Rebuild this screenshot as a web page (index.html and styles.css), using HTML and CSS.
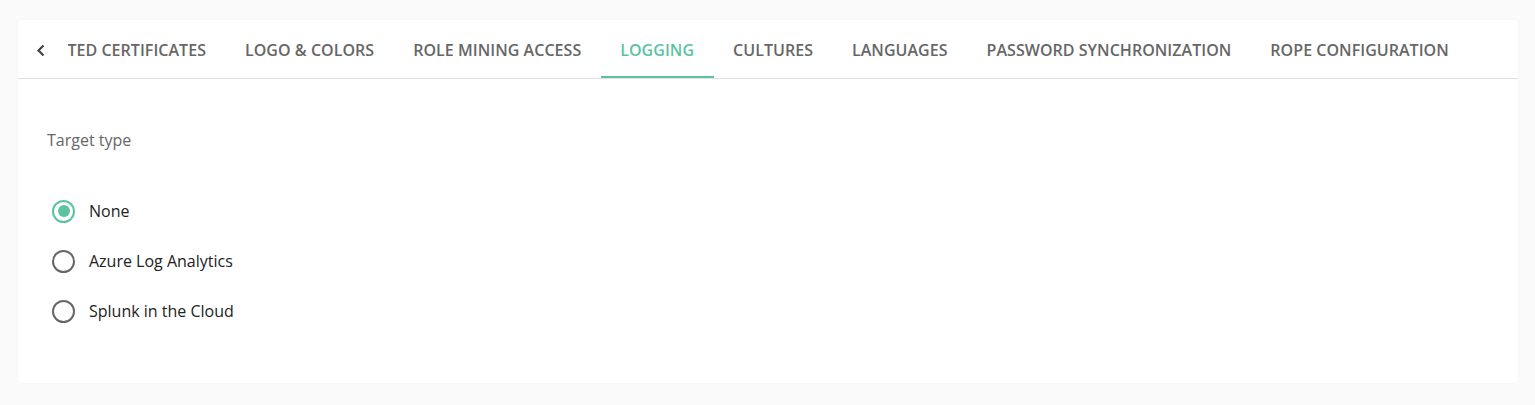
FILE: index.html
```html
<!DOCTYPE html>
<html lang="en">
<head>
<meta charset="utf-8">
<title>Logging</title>
<link rel="stylesheet" href="styles.css">
</head>
<body>
<div class="card">
  <div class="tabbar">
    <button class="scroll-btn" aria-label="Scroll left">
      <svg width="10" height="13" viewBox="0 0 10 13"><path d="M7.5 1.5 L2.5 6.5 L7.5 11.5" fill="none" stroke="#444" stroke-width="2.2"/></svg>
    </button>
    <div class="tabs">
      <div class="tab tab-clipped">TRUSTED CERTIFICATES</div>
      <div class="tab">LOGO &amp; COLORS</div>
      <div class="tab">ROLE MINING ACCESS</div>
      <div class="tab active">LOGGING</div>
      <div class="tab">CULTURES</div>
      <div class="tab">LANGUAGES</div>
      <div class="tab">PASSWORD SYNCHRONIZATION</div>
      <div class="tab">ROPE CONFIGURATION</div>
    </div>
  </div>
  <div class="content">
    <div class="field-label">Target type</div>
    <div class="radios">
      <label class="radio checked"><span class="dot"></span><span class="radio-text">None</span></label>
      <label class="radio"><span class="dot"></span><span class="radio-text">Azure Log Analytics</span></label>
      <label class="radio"><span class="dot"></span><span class="radio-text">Splunk in the Cloud</span></label>
    </div>
  </div>
</div>
</body>
</html>
```

FILE: styles.css
```css
* { box-sizing: border-box; }
html, body { margin: 0; padding: 0; }
body {
  background: #fafafa;
  font-family: "Open Sans", "Noto Sans", sans-serif;
  width: 1535px;
  height: 405px;
  overflow: hidden;
}
.card {
  margin: 20px 0 0 18px;
  width: 1500px;
  height: 363px;
  background: #fff;
  border-radius: 4px;
  box-shadow: 0 0 2px rgba(0,0,0,0.04);
}
.tabbar {
  display: flex;
  align-items: stretch;
  height: 58px;
}
.scroll-btn {
  width: 50px;
  border: 0;
  background: transparent;
  padding: 2px 0 0 18px;
  display: flex;
  align-items: center;
  justify-content: flex-start;
}
.scroll-btn svg { display: block; }
.tabs {
  display: flex;
  align-items: stretch;
  overflow: hidden;
}
.tab {
  padding: 4px 20px 0 19px;
  display: flex;
  align-items: center;
  font-size: 16px;
  font-weight: 600;
  color: #666;
  white-space: nowrap;
  border-bottom: 2px solid transparent;
  letter-spacing: 0.04px;
}
.tab-clipped {
  width: 158px;
  justify-content: flex-end;
  overflow: hidden;
  padding-left: 0;
}
.tab.active {
  color: #5bc3a1;
  border-bottom-color: #5bc3a1;
}
.content {
  border-top: 1px solid #e0e0e0;
  padding: 49px 0 0 29px;
}
.field-label {
  font-size: 16px;
  color: #666;
  line-height: 24px;
}
.radios {
  display: flex;
  flex-direction: column;
  gap: 26px;
  margin-top: 47px;
  padding-left: 5px;
}
.radio {
  display: flex;
  align-items: center;
  gap: 14px;
  height: 24px;
  font-size: 16px;
  color: #222;
}
.dot {
  width: 23px;
  height: 23px;
  border: 2px solid #666;
  border-radius: 50%;
  display: flex;
  align-items: center;
  justify-content: center;
  flex: none;
}
.radio.checked .dot { border-color: #5bc3a1; }
.radio.checked .dot::after {
  content: "";
  width: 12px;
  height: 12px;
  border-radius: 50%;
  background: #5bc3a1;
}
```
